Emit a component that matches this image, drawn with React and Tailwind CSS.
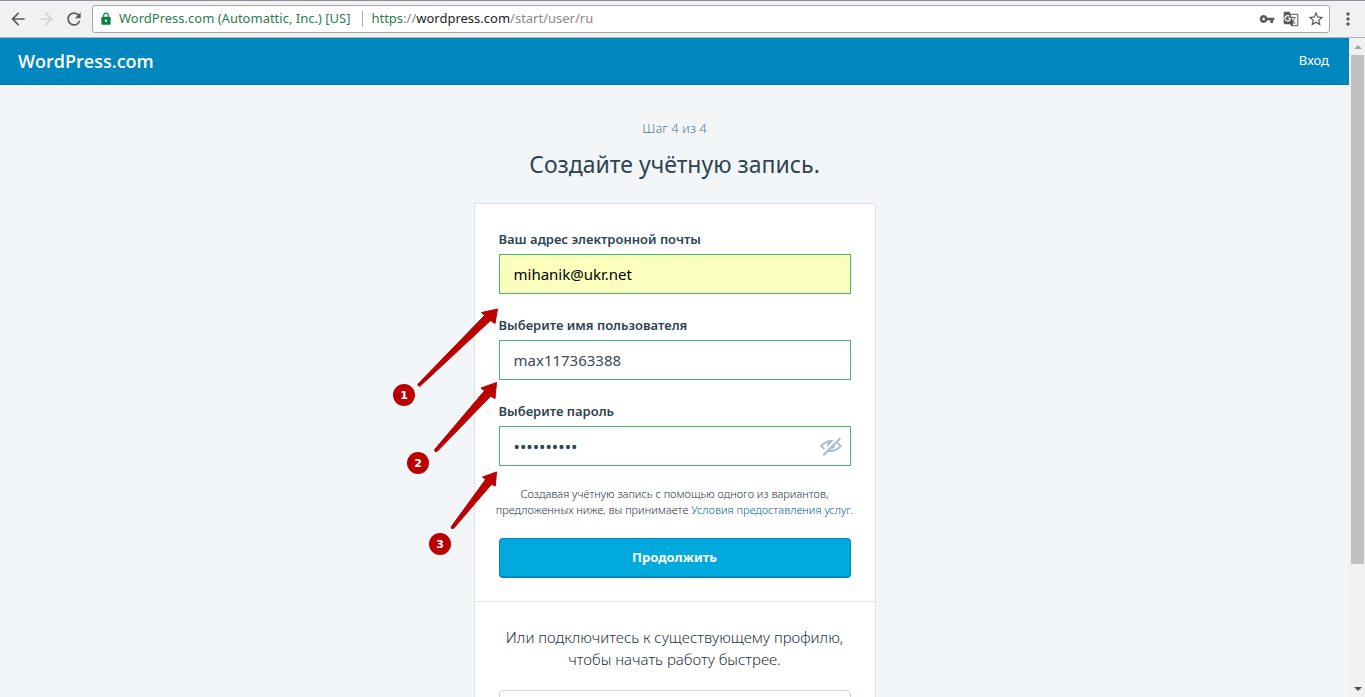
import React from "react";
import {
  MdArrowBack,
  MdArrowForward,
  MdRefresh,
  MdLock,
  MdVpnKey,
  MdGTranslate,
  MdStarBorder,
  MdMoreVert,
} from "react-icons/md";

function BrowserBar() {
  return (
    <div className="flex h-[38px] shrink-0 items-center gap-2 border-t border-b border-t-[#8f909c] border-b-[#b5b2b5] bg-[#f2f1f2] pl-2 pr-[7px] text-[#5a5a5a]">
      <div className="flex items-center gap-2">
        <button type="button" aria-label="Назад" className="w-5"><MdArrowBack size={20} /></button>
        <button type="button" aria-label="Вперёд" className="w-5 text-[#d2d2d2]" disabled><MdArrowForward size={20} /></button>
        <button type="button" aria-label="Обновить" className="w-5"><MdRefresh size={20} /></button>
      </div>
      <div className="flex h-7 min-w-0 flex-1 items-center rounded-[3px] border border-[#a9a6a9] bg-white pr-1 pl-1.5 text-[13px] whitespace-nowrap">
        <MdLock size={14} className="mr-1.5 shrink-0 text-[#0b8043]" />
        <span className="text-[#2b7d4f]">WordPress.com (Automattic, Inc.) [US]</span>
        <span className="ml-3 mr-2 h-4 w-px bg-[#a8a8a8]" />
        <span className="flex-1 text-[#888]">
          <span className="text-[#2b7d4f]">https</span>://<span className="text-[#222]">wordpress.com</span>/start/user/ru
        </span>
        <div className="flex items-center gap-2">
          <button type="button" aria-label="Пароли"><MdVpnKey size={16} /></button>
          <button type="button" aria-label="Перевести"><MdGTranslate size={16} /></button>
          <button type="button" aria-label="В закладки"><MdStarBorder size={18} /></button>
        </div>
      </div>
      <button type="button" aria-label="Меню" className="w-5"><MdMoreVert size={20} /></button>
    </div>
  );
}

function Scrollbar() {
  return (
    <div className="flex w-4 shrink-0 flex-col bg-[#f1f1f1] pr-px pl-0.5" aria-hidden="true">
      <div className="flex h-[17px] items-center justify-center">
        <svg width="8" height="4" viewBox="0 0 8 4" fill="#a3a3a3"><path d="M0 4 4 0l4 4z" /></svg>
      </div>
      <div className="flex-1"><div className="h-[81.4%] bg-[#c1c1c1]" /></div>
      <div className="flex h-[17px] items-center justify-center">
        <svg width="8" height="4" viewBox="0 0 8 4" fill="#505050"><path d="M0 0h8L4 4z" /></svg>
      </div>
    </div>
  );
}

const field = "block h-10 w-full border border-[#4ab866] px-3.5 text-[15px] outline-none";
const label = "mb-[5px] block text-[13px] leading-5 font-semibold text-[#2e4453]";

function Marker({ x, y, n }) {
  return (
    <g>
      <circle cx={x} cy={y} r="11" fill="#ba0000" />
      <text x={x} y={y + 4} textAnchor="middle" fill="#fff" className="font-['DejaVu_Sans',sans-serif] text-[11px] font-bold">{n}</text>
    </g>
  );
}

function Annotations() {
  return (
    <svg className="pointer-events-none absolute top-[89px] -left-[91px]" width="125" height="270" viewBox="384 293 125 270" aria-hidden="true">
      <g fill="#ba0000" stroke="#ba0000" strokeWidth="1" strokeLinejoin="round">
        <path d="M497.5 309 481.5 312.5 484.5 315.5 417.8 384.2 Q417.8 386.8 420.2 386L490.5 320.5 495 323.5Z" />
        <path d="M496.5 382.5 481 388 484.5 390.8 434.6 449.6 Q434.3 452.2 437 451.6L490.5 396.3 495 398.5Z" />
        <path d="M496.5 472 482.5 477 485.5 479.6 451.2 526.8 Q451 529.3 453.6 528.4L491.5 484.3 495.3 486Z" />
      </g>
      <Marker x={404} y={395} n="1" />
      <Marker x={418} y={463} n="2" />
      <Marker x={440} y={544} n="3" />
    </svg>
  );
}

function SignupForm() {
  return (
    <div className="relative w-full max-w-[402px] border border-[#dbe4ea] bg-white">
      <form className="px-6 pt-[25px] pb-[23px]" onSubmit={(e) => e.preventDefault()}>
        <div className="mb-[21px]">
          <label htmlFor="email" className={label}>Ваш адрес электронной почты</label>
          <input id="email" type="email" defaultValue="mihanik@ukr.net" className={`${field} bg-[#faffbd] text-black`} />
        </div>
        <div className="mb-[21px]">
          <label htmlFor="user" className={label}>Выберите имя пользователя</label>
          <input id="user" type="text" defaultValue="max117363388" className={`${field} bg-white text-[#3b4a58]`} />
        </div>
        <div>
          <label htmlFor="pass" className={label}>Выберите пароль</label>
          <div className="relative">
            <input id="pass" type="password" defaultValue="abcdefghij" className="block h-10 w-full border border-[#4ab866] bg-white px-3.5 text-[17px] text-[#2e4453] outline-none" />
            <button type="button" aria-label="Показать пароль" className="absolute top-2 right-2 text-[#a8bece]">
              <svg width="24" height="24" viewBox="0 0 24 24" fill="currentColor">
                <path d="M1 12s4.188-6 11-6c.947 0 1.839.121 2.678.322L8.36 12.64A3.96 3.96 0 0 1 8 11c0-.937.335-1.787.875-2.469-2.392.815-4.213 2.37-5.188 3.469.567.64 1.423 1.429 2.531 2.133l-1.45 1.45C2.31 13.876 1 12 1 12zm22 0s-4.188 6-11 6c-.946 0-1.836-.124-2.676-.323L5 22l-1.5-1.5 17-17L22 5l-3.147 3.147C21.501 9.869 23 12 23 12zm-2.615.006a10.8 10.8 0 0 0-2.987-2.403L16 11a4 4 0 0 1-4 4l-.947.947c.31.031.624.053.947.053 3.978 0 6.943-2.478 8.385-3.994z" />
              </svg>
            </button>
          </div>
        </div>
        <p className="-mx-3 my-5 text-center text-[11px] leading-4 font-light whitespace-nowrap text-[#1f3344]">
          Создавая учётную запись с помощью одного из вариантов,
          <br />
          предложенных ниже, вы принимаете <a href="#terms" className="text-[#005f94]">Условия предоставления услуг</a>.
        </p>
        <button type="submit" className="flex h-10 w-full items-center justify-center rounded border border-b-2 border-[#0087be] bg-[#00aadc] text-[13px] font-bold text-white">
          Продолжить
        </button>
      </form>
      <div className="border-t border-[#dbe4ea] px-6 pt-6">
        <p className="text-center text-[15px] leading-[22px] font-light whitespace-nowrap text-[#1f3344]">
          Или подключитесь к существующему профилю,
          <br />
          чтобы начать работу быстрее.
        </p>
        <button type="button" aria-label="Подключить профиль" className="mt-5 block h-10 w-full rounded border border-[#c8d7e1] bg-white" />
      </div>
      <Annotations />
    </div>
  );
}

export default function App() {
  return (
    <div className="flex h-screen flex-col overflow-hidden bg-[#f3f6f8] font-['Noto_Sans','Open_Sans',sans-serif]">
      <BrowserBar />
      <div className="flex min-h-0 flex-1">
        <div className="min-w-0 flex-1 overflow-hidden">
          <header className="flex h-[47px] items-center justify-between border-b border-[#0077a8] bg-[#0087be] pr-5 pl-[18px] text-white">
            <a href="#home" className="font-['Open_Sans',sans-serif] text-lg font-semibold">WordPress.com</a>
            <a href="#login" className="text-[13px]">Вход</a>
          </header>
          <main className="flex flex-col items-center pt-[33px]">
            <p className="text-[13px] leading-5 font-light text-[#557a95]">Шаг 4 из 4</p>
            <h1 className="mt-2 mb-[21px] text-[23px] leading-9 text-[#2e4453]">Создайте учётную запись.</h1>
            <SignupForm />
          </main>
        </div>
        <Scrollbar />
      </div>
    </div>
  );
}
